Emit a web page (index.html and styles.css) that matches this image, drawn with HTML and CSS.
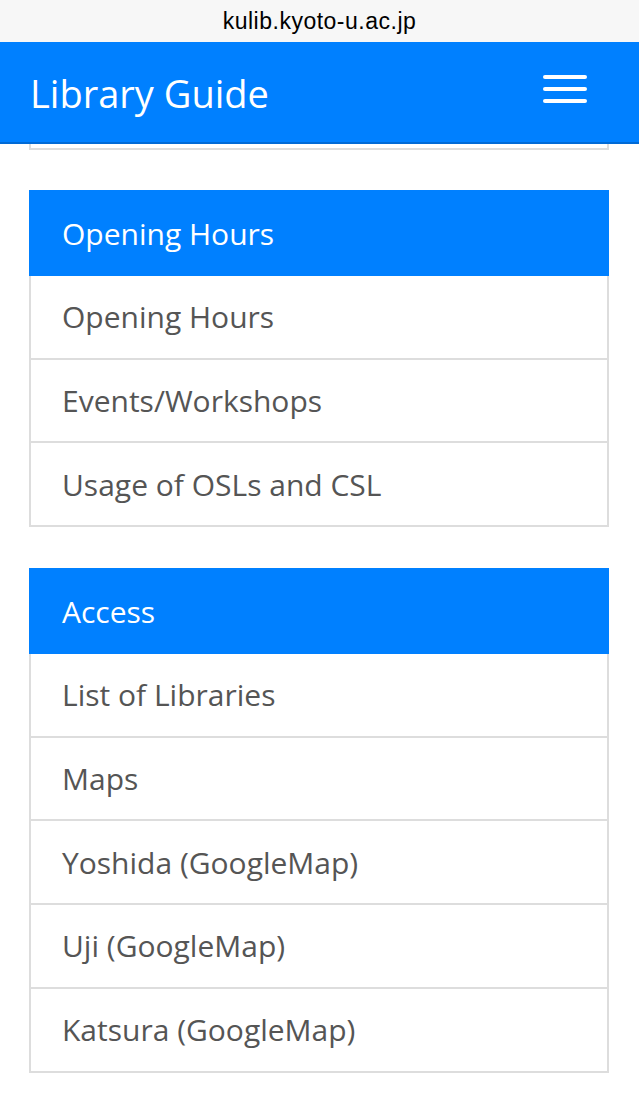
FILE: index.html
```html
<!DOCTYPE html>
<html lang="en">
<head>
<meta charset="utf-8">
<title>Library Guide</title>
<link rel="stylesheet" href="styles.css">
</head>
<body>
<div class="urlbar">kulib.kyoto-u.ac.jp</div>
<header class="navbar">
  <span class="brand">Library Guide</span>
  <span class="burger"><i></i><i></i><i></i></span>
</header>
<main class="content">
  <div class="remnant"></div>
  <section class="panel">
    <div class="panel-head">Opening Hours</div>
    <a class="panel-item">Opening Hours</a>
    <a class="panel-item">Events/Workshops</a>
    <a class="panel-item">Usage of OSLs and CSL</a>
  </section>
  <section class="panel">
    <div class="panel-head">Access</div>
    <a class="panel-item">List of Libraries</a>
    <a class="panel-item">Maps</a>
    <a class="panel-item">Yoshida (GoogleMap)</a>
    <a class="panel-item">Uji (GoogleMap)</a>
    <a class="panel-item">Katsura (GoogleMap)</a>
  </section>
</main>
</body>
</html>
```
FILE: styles.css
```css
html, body {
  margin: 0;
  padding: 0;
  background: #ffffff;
}
body {
  font-family: "Open Sans", "Noto Sans", sans-serif;
  width: 639px;
}
.urlbar {
  height: 42px;
  background: #f7f7f7;
  color: #000;
  font-family: "Liberation Sans", Arial, sans-serif;
  font-size: 23px;
  letter-spacing: 0.5px;
  display: flex;
  align-items: center;
  justify-content: center;
}
.navbar {
  height: 100px;
  background: #0080ff;
  border-bottom: 2px solid #006ad6;
  display: flex;
  align-items: center;
  justify-content: space-between;
  padding: 0 52px 0 30px;
}
.brand {
  color: #fff;
  font-size: 38px;
  line-height: 1;
  margin-top: 2px;
}
.burger {
  display: flex;
  flex-direction: column;
  gap: 8px;
  width: 44px;
  margin-top: -6px;
}
.burger i {
  display: block;
  height: 4px;
  background: #fff;
  border-radius: 2px;
}
.content {
  padding: 0 30px 40px 29px;
  display: flex;
  flex-direction: column;
  gap: 40px;
}
.remnant {
  height: 4px;
  border: 2px solid #dddddd;
  border-top: none;
}
.panel {
  display: flex;
  flex-direction: column;
  margin-bottom: 1px;
}
.panel-head {
  height: 86px;
  background: #0080ff;
  color: #fff;
  font-size: 30px;
  display: flex;
  align-items: center;
  padding-left: 33px;
}
.panel-item {
  height: 81.7px;
  border: 2px solid #dddddd;
  border-top: none;
  color: #555555;
  font-size: 30px;
  display: flex;
  align-items: center;
  padding-left: 31px;
}
```
